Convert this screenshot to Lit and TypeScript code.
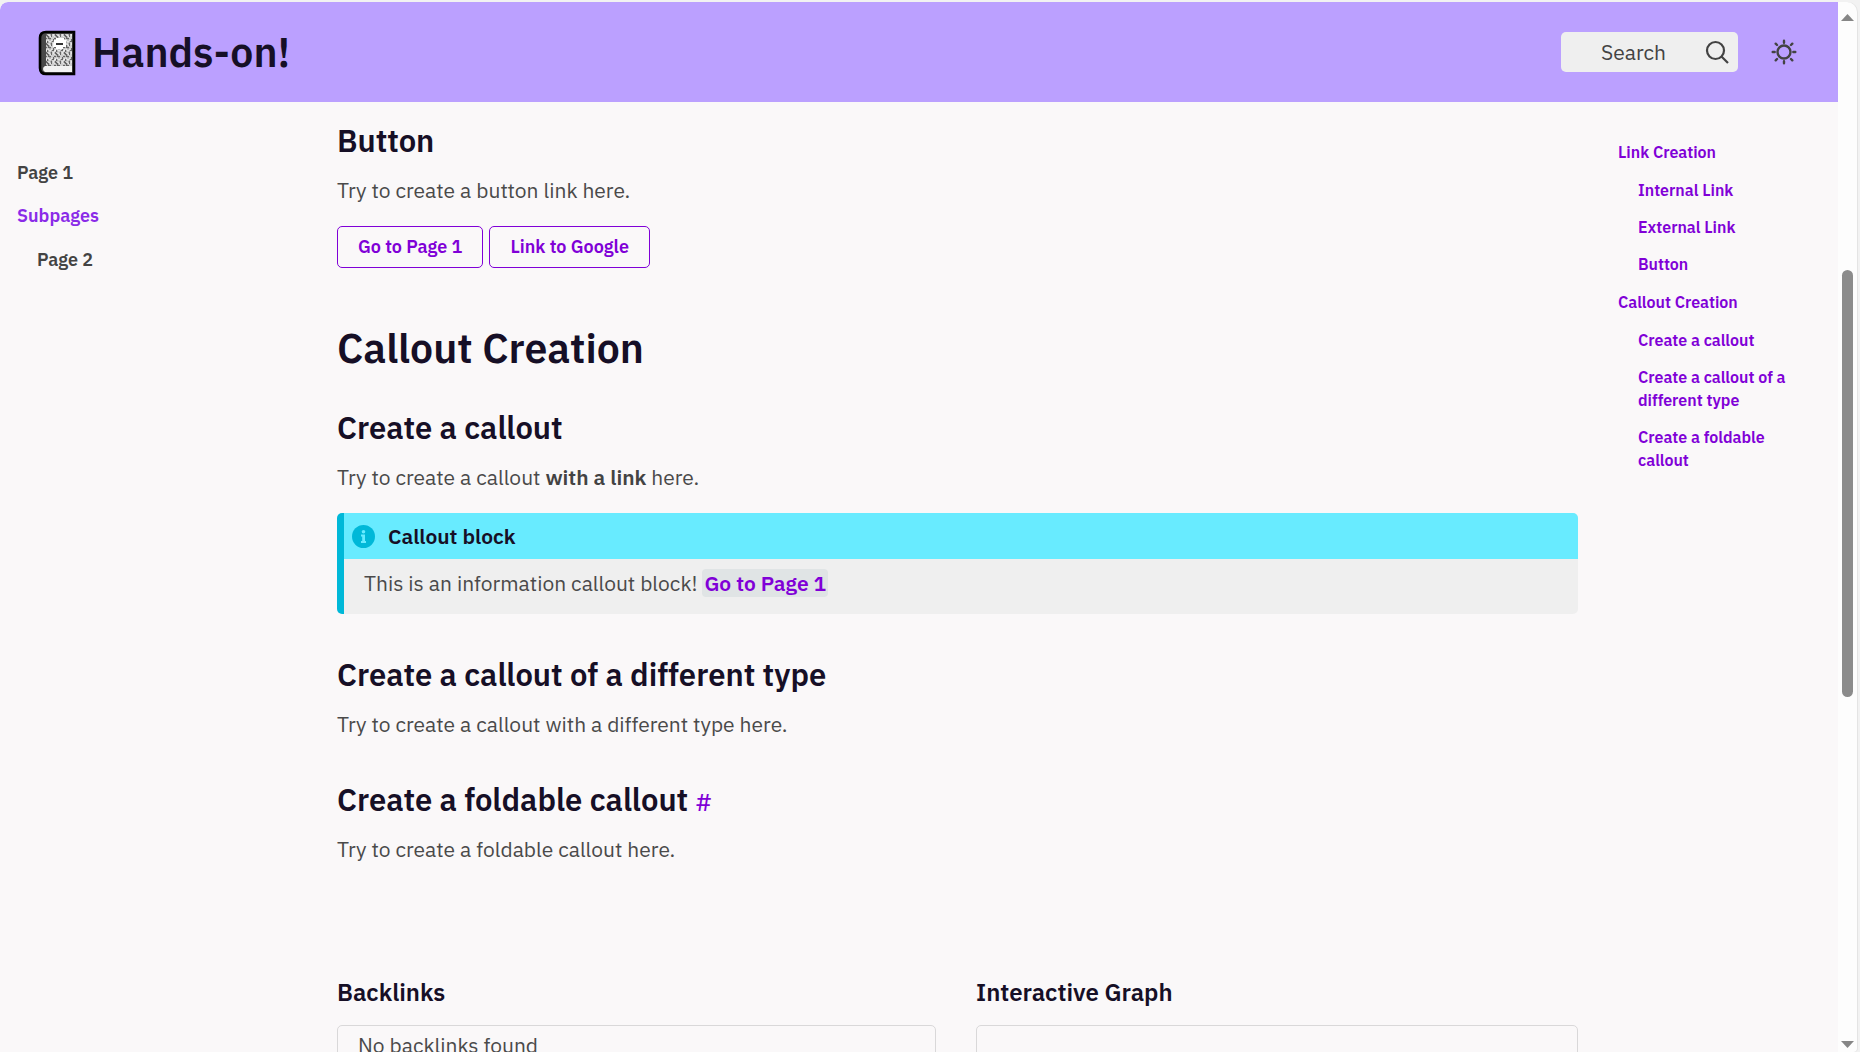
import { LitElement, html, css } from "lit";
import { customElement } from "lit/decorators.js";

interface TocSection {
  label: string;
  children: string[];
}

const TOC: TocSection[] = [
  { label: "Link Creation", children: ["Internal Link", "External Link", "Button"] },
  {
    label: "Callout Creation",
    children: ["Create a callout", "Create a callout of a different type", "Create a foldable callout"],
  },
];

const slug = (label: string) => "#" + label.toLowerCase().replace(/ /g, "-");

@customElement("site-header")
class SiteHeader extends LitElement {
  static styles = css`
    :host { display: block; }
    .bar {
      box-sizing: border-box;
      display: flex;
      align-items: center;
      height: 100px;
      padding: 0 40px 0 38px;
      background: #bba0ff;
      border-top-left-radius: 8px;
    }
    .brand {
      display: flex;
      align-items: center;
      gap: 16px;
      margin-right: auto;
      color: #160f26;
      font-size: 41px;
      font-weight: 600;
      line-height: 52px;
      text-decoration: none;
    }
    .book { display: block; width: 38px; height: 46px; padding-top: 2px; }
    .search {
      box-sizing: border-box;
      display: flex;
      align-items: center;
      justify-content: space-between;
      width: 177px;
      height: 40px;
      padding: 0 9px 0 40px;
      border: 0;
      border-radius: 5px;
      background: #efefef;
      color: #434343;
      font: inherit;
    }
    .search svg { width: 24px; height: 24px; }
    .theme {
      display: flex;
      margin-left: 32px;
      padding: 0;
      border: 0;
      background: none;
      color: #434343;
    }
    .theme svg { width: 28px; height: 28px; }
  `;

  render() {
    return html`
      <header class="bar">
        <a class="brand" href="/">
          <svg class="book" viewBox="0 0 38 46" aria-hidden="true">
            <defs>
              <pattern id="marble" width="9" height="9" patternUnits="userSpaceOnUse">
                <rect width="9" height="9" fill="#666" />
                <path
                  d="M0 1h2v2h2V1h2M1 5h2v2h1M5 4h2v2H5M8 0v2h1M4 8h3M0 4v1M7 3h2M0 7v2M8 6v2"
                  fill="none" stroke="#f2f2f2" stroke-width="1.3"
                />
              </pattern>
            </defs>
            <path d="M8 2h28v42H8q-6 0-6-6V8q0-6 6-6z" fill="#484848" stroke="#000" stroke-width="2.6" />
            <rect x="8" y="4" width="26" height="33" fill="url(#marble)" />
            <path d="M16 10h2V8h8v2h2v7h-3v2h-7v-2h-3z" fill="#fff" />
            <rect x="18" y="13" width="7" height="2" fill="#333" />
            <path d="M7 36h27v6H7q-2-1-2-3t2-3z" fill="#f2f2f2" />
          </svg>
          <span>Hands-on!</span>
        </a>
        <button class="search" type="button">
          Search
          <svg viewBox="0 0 24 24" fill="none" stroke="currentColor" stroke-width="2.2" aria-hidden="true">
            <circle cx="10.5" cy="10.5" r="8.5" />
            <path d="M16.5 16.5 23 23" />
          </svg>
        </button>
        <button class="theme" type="button" aria-label="Toggle theme">
          <svg viewBox="0 0 28 28" fill="none" stroke="currentColor" stroke-width="2.4" stroke-linecap="round" aria-hidden="true">
            <circle cx="14" cy="14" r="6.5" />
            <path d="M14 2.7v2M14 23.3v2M2.7 14h2M23.3 14h2M5.7 5.7 7 7M21 21l1.3 1.3M5.7 22.3 7 21M21 7l1.3-1.3" />
          </svg>
        </button>
      </header>
    `;
  }
}

@customElement("page-scrollbar")
class PageScrollbar extends LitElement {
  static styles = css`
    :host {
      box-sizing: border-box;
      display: flex;
      flex-direction: column;
      align-items: center;
      width: 19px;
      padding: 12px 0 4px;
      background: #fdfdfd;
      border-top-right-radius: 10px;
      border-bottom-right-radius: 4px;
      box-shadow: 1px 0 0 #e4e4e4;
    }
    .arrow { flex: none; width: 13px; height: 7px; fill: #868686; }
    .before { flex: 249; }
    .thumb { flex: 427; width: 11px; border-radius: 6px; background: #8b8b8b; }
    .after { flex: 344; }
  `;

  render() {
    return html`
      <svg class="arrow" viewBox="0 0 13 7"><path d="M6.5 0 13 7H0z" /></svg>
      <div class="before"></div>
      <div class="thumb"></div>
      <div class="after"></div>
      <svg class="arrow" viewBox="0 0 13 7"><path d="M0 0h13L6.5 7z" /></svg>
    `;
  }
}

@customElement("app-root")
class AppRoot extends LitElement {
  static styles = css`
    :host {
      box-sizing: border-box;
      display: flex;
      height: 100vh;
      padding: 2px 3px 0 0;
      overflow: hidden;
      background: #f2f2f2;
      color: #4a4a4a;
      font-family: "IBM Plex Sans", "Noto Sans", "Open Sans", sans-serif;
      font-size: 21px;
      line-height: 30px;
    }
    .page {
      flex: 1;
      min-width: 0;
      overflow: hidden;
      background: #faf8f9;
      border-top-left-radius: 8px;
    }
    .columns { display: flex; }
    a { color: #8000d7; text-decoration: none; font-weight: 600; }
    strong { color: #434343; font-weight: 600; }
    ul { list-style: none; margin: 0; padding: 0; }

    .pages {
      box-sizing: border-box;
      flex: none;
      width: 337px;
      padding: 57px 17px 0;
      font-size: 18px;
      line-height: 28px;
    }
    .pages ul { display: flex; flex-direction: column; gap: 15px; }
    .pages ul ul { margin-top: 16px; padding-left: 20px; }
    .pages a { display: block; color: #434343; }
    .pages .group { color: #8a2be8; }

    .content { flex: 1; min-width: 0; padding-top: 19px; }
    h1, h2, h3, p { margin: 0; }
    h1, h2, h3 { color: #160f26; font-weight: 600; }
    h1 { margin-top: 54px; font-size: 41px; line-height: 52px; }
    h2 { margin-top: 34px; font-size: 31px; line-height: 40px; }
    .content h2:first-child { margin-top: 0; }
    h3 { font-size: 24px; line-height: 32px; }
    p { margin-top: 14px; }
    .anchor { font-size: 24px; font-weight: 500; line-height: 32px; }
    .spaced { margin-top: 41px; }

    .buttons { display: flex; gap: 6px; margin-top: 21px; }
    .button {
      padding: 6px 20px;
      border: 1px solid #8000d7;
      border-radius: 5px;
      font-size: 18px;
      line-height: 28px;
    }

    .callout {
      margin-top: 21px;
      overflow: hidden;
      border-left: 7px solid #00b8d8;
      border-radius: 5px;
      background: #efefef;
    }
    .callout-title {
      display: flex;
      align-items: center;
      gap: 13px;
      padding: 8px;
      background: #68ebff;
      color: #160f26;
      font-weight: 600;
    }
    .callout-title svg { width: 23px; height: 23px; }
    .callout-body { margin: 0; padding: 9px 20px 16px; }
    .chip { padding: 0 2px; border-radius: 4px; background: #e0e4e5; }

    .footer { display: grid; grid-template-columns: 599fr 602fr; gap: 40px; margin-top: 112px; }
    .panel {
      height: 200px;
      margin-top: 17px;
      padding: 4px 20px;
      border: 1px solid #d9d8d9;
      border-radius: 5px;
    }

    .toc {
      box-sizing: border-box;
      flex: none;
      width: 260px;
      padding: 39px 40px 0;
      font-size: 16px;
      line-height: 23px;
    }
    .toc ul { display: flex; flex-direction: column; gap: 15px; }
    .toc ul ul { gap: 14px; margin-top: 15px; padding-left: 20px; }
    .toc a { display: block; }
  `;

  render() {
    return html`
      <div class="page">
        <site-header></site-header>
        <div class="columns">
          <nav class="pages" aria-label="Pages">
            <ul>
              <li><a href="#page-1">Page 1</a></li>
              <li>
                <a class="group" href="#subpages">Subpages</a>
                <ul><li><a href="#page-2">Page 2</a></li></ul>
              </li>
            </ul>
          </nav>
          <main class="content">
            <h2 id="button">Button</h2>
            <p>Try to create a button link here.</p>
            <div class="buttons">
              <a class="button" href="#page-1">Go to Page 1</a>
              <a class="button" href="#google">Link to Google</a>
            </div>
            <h1>Callout Creation</h1>
            <h2>Create a callout</h2>
            <p>Try to create a callout <strong>with a link</strong> here.</p>
            <section class="callout">
              <div class="callout-title">
                <svg viewBox="0 0 23 23" aria-hidden="true">
                  <circle cx="11.5" cy="11.5" r="11.5" fill="#00b8d8" />
                  <circle cx="11.5" cy="6.8" r="1.8" fill="#68ebff" />
                  <path d="M9 9.5h4v6.5h1v2H9v-2h1.2v-4.5H9z" fill="#68ebff" />
                </svg>
                Callout block
              </div>
              <p class="callout-body">This is an information callout block! <a class="chip" href="#page-1">Go to Page 1</a></p>
            </section>
            <h2 class="spaced">Create a callout of a different type</h2>
            <p>Try to create a callout with a different type here.</p>
            <h2 class="spaced">Create a foldable callout <a class="anchor" href="#create-a-foldable-callout">#</a></h2>
            <p>Try to create a foldable callout here.</p>
            <div class="footer">
              <section><h3>Backlinks</h3><div class="panel">No backlinks found</div></section>
              <section><h3>Interactive Graph</h3><div class="panel"></div></section>
            </div>
          </main>
          <nav class="toc" aria-label="Table of contents">
            <ul>
              ${TOC.map(
                (section) => html`<li>
                  <a href=${slug(section.label)}>${section.label}</a>
                  <ul>
                    ${section.children.map((child) => html`<li><a href=${slug(child)}>${child}</a></li>`)}
                  </ul>
                </li>`,
              )}
            </ul>
          </nav>
        </div>
      </div>
      <page-scrollbar aria-hidden="true"></page-scrollbar>
    `;
  }
}
